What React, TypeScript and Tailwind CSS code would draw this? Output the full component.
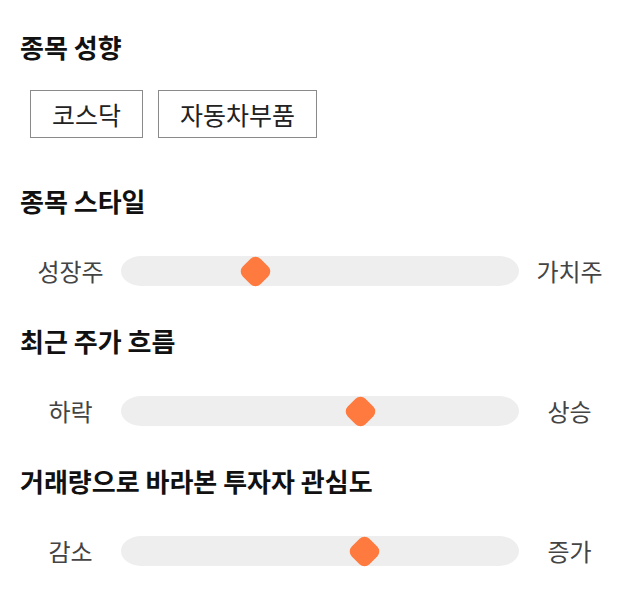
const font = {
  fontFamily: '"Noto Sans CJK KR", "Noto Sans", sans-serif',
};

type SliderRowProps = {
  left: string;
  right: string;
  value: number;
};

function SliderRow({ left, right, value }: SliderRowProps) {
  return (
    <div className="flex h-[30px] items-center">
      <span className="w-[101px] text-center text-[24px] leading-[30px] text-[#444444]">
        {left}
      </span>
      <div className="relative h-[30px] flex-1 rounded-[20px/15px] bg-[#eeeeee]">
        <div
          className="absolute top-1/2 flex h-[30px] w-[30px] -translate-x-1/2 -translate-y-1/2 items-center justify-center"
          style={{ left: `${value * 100}%` }}
        >
          <div className="h-[25px] w-[25px] rotate-45 rounded-[7px] bg-[#ff7a3f]" />
        </div>
      </div>
      <span className="w-[101px] text-center text-[24px] leading-[30px] text-[#444444]">
        {right}
      </span>
    </div>
  );
}

function Heading({ children }: { children: string }) {
  return (
    <h2 className="text-[26px] font-bold leading-[32px] text-[#111111]">
      {children}
    </h2>
  );
}

export default function App() {
  const tags = ["코스닥", "자동차부품"];

  return (
    <div className="h-[606px] w-[640px] bg-white px-5 pt-[31px]" style={font}>
      <section>
        <Heading>종목 성향</Heading>
        <div className="mt-[27px] flex gap-[15px] pl-[10px]">
          {tags.map((tag) => (
            <span
              key={tag}
              className="border border-[#8a8a8a] px-[21px] py-[7px] text-[25px] leading-[32px] text-[#222222]"
            >
              {tag}
            </span>
          ))}
        </div>
      </section>

      <section className="mt-[47px]">
        <Heading>종목 스타일</Heading>
        <div className="mt-[39px]">
          <SliderRow left="성장주" right="가치주" value={0.337} />
        </div>
      </section>

      <section className="mt-[39px]">
        <Heading>최근 주가 흐름</Heading>
        <div className="mt-[39px]">
          <SliderRow left="하락" right="상승" value={0.603} />
        </div>
      </section>

      <section className="mt-[39px]">
        <Heading>거래량으로 바라본 투자자 관심도</Heading>
        <div className="mt-[39px]">
          <SliderRow left="감소" right="증가" value={0.611} />
        </div>
      </section>
    </div>
  );
}
